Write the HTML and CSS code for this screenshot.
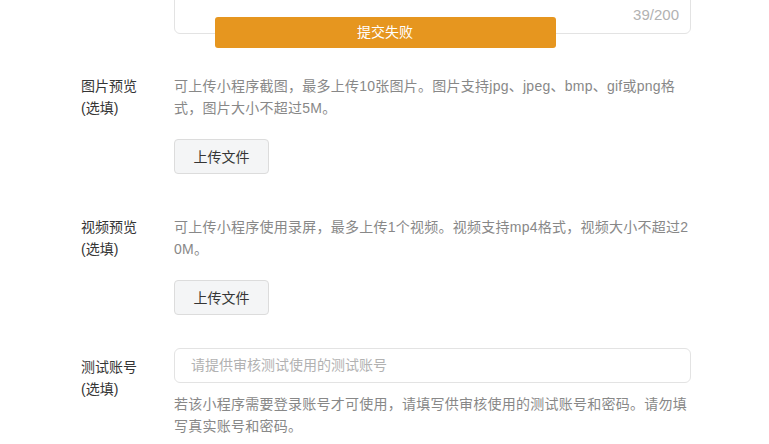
FILE: index.html
```html
<!DOCTYPE html>
<html lang="zh-CN">
<head>
<meta charset="utf-8">
<link rel="stylesheet" href="styles.css">
</head>
<body>
<div class="form">
  <div class="row row-textarea">
    <div class="label"></div>
    <div class="field">
      <div class="textarea"><span class="counter">39/200</span></div>
    </div>
  </div>

  <div class="row row-upload">
    <div class="label">图片预览<br>(选填)</div>
    <div class="field">
      <p class="desc">可上传小程序截图，最多上传10张图片。图片支持jpg、jpeg、bmp、gif或png格式，图片大小不超过5M。</p>
      <button class="btn">上传文件</button>
    </div>
  </div>

  <div class="row row-upload2">
    <div class="label">视频预览<br>(选填)</div>
    <div class="field">
      <p class="desc">可上传小程序使用录屏，最多上传1个视频。视频支持mp4格式，视频大小不超过20M。</p>
      <button class="btn">上传文件</button>
    </div>
  </div>

  <div class="row row-account">
    <div class="label label-input">测试账号<br>(选填)</div>
    <div class="field">
      <div class="input">请提供审核测试使用的测试账号</div>
      <p class="desc desc-help">若该小程序需要登录账号才可使用，请填写供审核使用的测试账号和密码。请勿填写真实账号和密码。</p>
    </div>
  </div>
</div>

<div class="toast">提交失败</div>
</body>
</html>
```

FILE: styles.css
```css
* { box-sizing: border-box; }

html, body {
  margin: 0;
  padding: 0;
  background: #ffffff;
  overflow: hidden;
}

body {
  font-family: "Liberation Sans", "Noto Sans CJK SC", sans-serif;
  font-size: 14px;
  line-height: 22px;
  color: #353535;
}

.form {
  margin-top: -66px;
  padding-left: 81px;
}

.row {
  display: grid;
  grid-template-columns: 93px 517px;
}

.label {
  color: #353535;
}

.textarea {
  height: 100px;
  border: 1px solid #e3e3e3;
  border-radius: 6px;
  display: flex;
  align-items: flex-end;
  justify-content: flex-end;
  padding: 0 11px 7px;
}

.counter {
  color: #b2b2b2;
  font-size: 15px;
  line-height: 22px;
}

.row-upload { margin-top: 41px; }
.row-upload2 { margin-top: 42px; }
.row-account { margin-top: 33px; }

.desc {
  margin: 0;
  width: 517px;
  color: #888888;
  letter-spacing: 0.25px;
  word-break: break-all;
}

.btn {
  display: block;
  margin-top: 20px;
  width: 95px;
  height: 35px;
  padding: 0;
  border: 1px solid #dcdcdc;
  border-radius: 4px;
  background: #f4f5f6;
  color: #353535;
  font-family: inherit;
  font-size: 14px;
  line-height: 22px;
}

.label-input { padding-top: 8px; }

.input {
  height: 35px;
  border: 1px solid #e3e3e3;
  border-radius: 6px;
  padding: 0 16px;
  color: #b2b2b2;
  line-height: 33px;
}

.desc-help { margin-top: 10px; }

.toast {
  position: fixed;
  top: 17px;
  left: calc(50% - 170px);
  width: 341px;
  height: 31px;
  border-radius: 3px;
  background: #e6961f;
  color: #ffffff;
  text-align: center;
  line-height: 31px;
  font-size: 14px;
}
```
